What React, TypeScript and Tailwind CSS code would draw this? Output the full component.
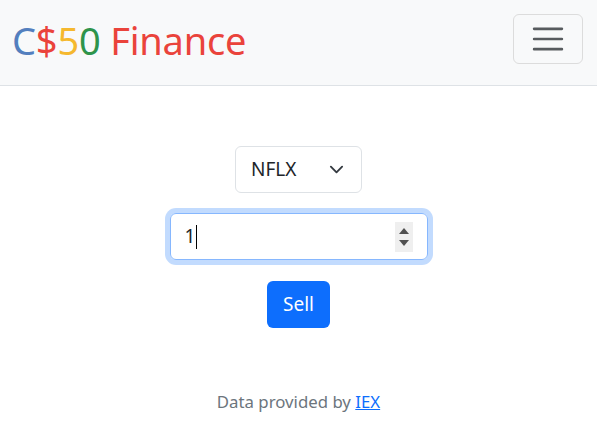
import React from "react";

export default function App() {
  return (
    <div className="min-h-[432px] bg-white" style={{ fontFamily: '"Noto Sans", "Open Sans", sans-serif' }}>
      <nav className="h-[86px] bg-[#f8f9fa] border-b border-[#dee2e6] flex items-start justify-between pl-[12px] pr-[14px]">
        <div className="mt-[17px] text-[38px] leading-[46px] tracking-[-0.2px] whitespace-nowrap">
          <span className="text-[#537fbe]">C</span>
          <span className="text-[#ea433b]">$</span>
          <span className="text-[#f5b82e]">5</span>
          <span className="text-[#2e944b]">0</span>
          <span className="text-[#ea433b]"> Finance</span>
        </div>
        <button className="mt-[14px] w-[70px] h-[50px] border border-[#dcdcdc] rounded-[6px] flex items-center justify-center">
          <svg width="38" height="38" viewBox="0 0 30 30">
            <path d="M4 7h22M4 15h22M4 23h22" stroke="rgba(33,37,41,0.75)" strokeWidth="2" strokeLinecap="round" fill="none" />
          </svg>
        </button>
      </nav>
      <main className="pt-[60px] flex flex-col items-center">
        <div className="w-[127px] h-[47px] border border-[#dee2e6] rounded-[6px] flex items-center justify-between pl-[15px] pr-[17px]">
          <span className="text-[19px] text-[#212529]">NFLX</span>
          <svg width="15" height="15" viewBox="0 0 16 16">
            <path d="M2 5l6 6 6-6" stroke="#343a40" strokeWidth="2" strokeLinecap="round" strokeLinejoin="round" fill="none" />
          </svg>
        </div>
        <div className="mt-[20px] w-[258px] h-[47px] border border-[#86b7fe] rounded-[6px] shadow-[0_0_0_5px_rgba(13,110,253,0.25)] flex items-center pl-[14px] pr-[14px]">
          <span className="text-[19px] text-[#212529] leading-none">1</span>
          <span className="w-[1px] h-[24px] bg-black ml-[1px]" />
          <div className="ml-auto w-[18px] h-[30px] bg-[#efefef] flex flex-col items-center justify-center gap-[6px]">
            <svg width="10" height="6" viewBox="0 0 10 6"><path d="M0 6L5 0L10 6Z" fill="#505050" /></svg>
            <svg width="10" height="6" viewBox="0 0 10 6"><path d="M0 0L10 0L5 6Z" fill="#505050" /></svg>
          </div>
        </div>
        <button className="mt-[21px] w-[63px] h-[47px] bg-[#0d6efd] rounded-[6px] text-white text-[19px] flex items-center justify-center">
          Sell
        </button>
        <footer className="mt-[61px] text-[16.8px] leading-[26px] text-[#6c757d]">
          Data provided by <a href="#" className="text-[#0d6efd] underline">IEX</a>
        </footer>
      </main>
    </div>
  );
}
